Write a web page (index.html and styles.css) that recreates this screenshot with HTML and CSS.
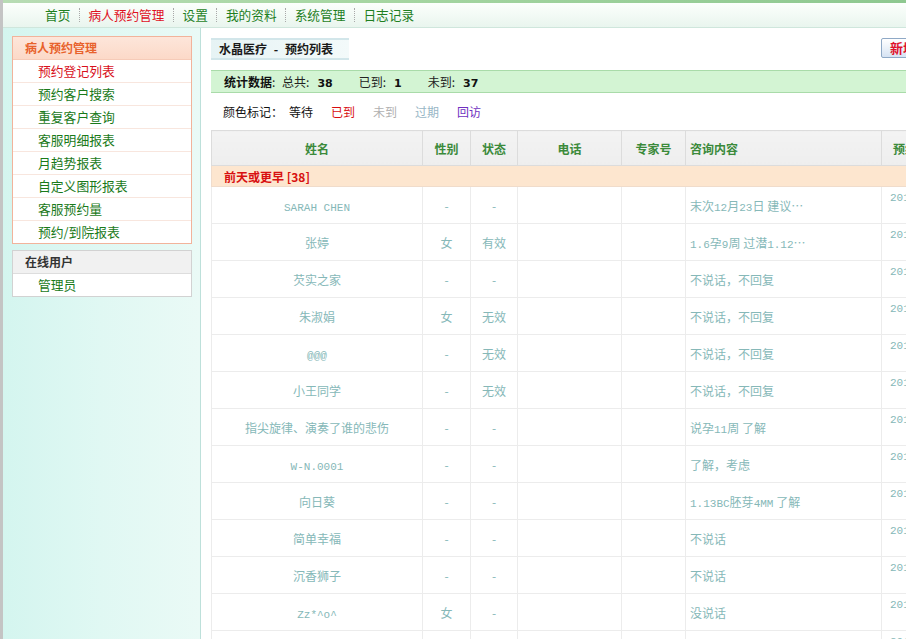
FILE: index.html
```html
<!DOCTYPE html>
<html lang="zh-CN">
<head>
<meta charset="utf-8">
<title>水晶医疗 - 预约列表</title>
<link rel="stylesheet" href="styles.css">
</head>
<body>
<div class="topbar"></div>
<nav class="nav">
  <a class="nav-item">首页</a><span class="sep"></span>
  <a class="nav-item active">病人预约管理</a><span class="sep"></span>
  <a class="nav-item">设置</a><span class="sep"></span>
  <a class="nav-item">我的资料</a><span class="sep"></span>
  <a class="nav-item">系统管理</a><span class="sep"></span>
  <a class="nav-item">日志记录</a>
</nav>
<div class="layout">
  <aside class="sidebar">
    <div class="menu menu-main">
      <div class="menu-title">病人预约管理</div>
      <a class="menu-item active">预约登记列表</a>
      <a class="menu-item">预约客户搜索</a>
      <a class="menu-item">重复客户查询</a>
      <a class="menu-item">客服明细报表</a>
      <a class="menu-item">月趋势报表</a>
      <a class="menu-item">自定义图形报表</a>
      <a class="menu-item">客服预约量</a>
      <a class="menu-item">预约/到院报表</a>
    </div>
    <div class="menu menu-online">
      <div class="menu-title">在线用户</div>
      <a class="menu-item">管理员</a>
    </div>
  </aside>
  <main class="main">
    <div class="content">
      <div class="title-row">
        <div class="page-title">水晶医疗 - 预约列表</div>
        <button class="btn-add">新增</button>
      </div>
      <div class="stats"><b>统计数据</b>: <span class="lbl">总共:</span><b class="num">38</b><span class="lbl">已到:</span><b class="num">1</b><span class="lbl">未到:</span><b class="num">37</b></div>
      <div class="legend">颜色标记：<span class="c-wait">等待</span><span class="c-come">已到</span><span class="c-not">未到</span><span class="c-exp">过期</span><span class="c-visit">回访</span></div>
      <table class="list">
        <colgroup>
          <col class="w-name"><col class="w-sex"><col class="w-state"><col class="w-tel"><col class="w-exp"><col class="w-ask"><col class="w-time">
        </colgroup>
        <thead>
          <tr><th>姓名</th><th>性别</th><th>状态</th><th>电话</th><th>专家号</th><th class="left">咨询内容</th><th class="left time-h">预约时间</th></tr>
        </thead>
        <tbody>
          <tr class="group"><td colspan="7">前天或更早 [38]</td></tr>
          <tr><td><span class="en">SARAH CHEN</span></td><td>-</td><td>-</td><td></td><td></td><td class="ask">末次<span class="en">12</span>月<span class="en">23</span>日 建议…</td><td class="time en">2012-12-28 10:00</td></tr>
          <tr><td>张婷</td><td>女</td><td>有效</td><td></td><td></td><td class="ask"><span class="en">1.6</span>孕<span class="en">9</span>周 过潜<span class="en">1.12</span>…</td><td class="time en">2012-12-27 14:30</td></tr>
          <tr><td>芡实之家</td><td>-</td><td>-</td><td></td><td></td><td class="ask">不说话，不回复</td><td class="time en">2012-12-27 11:20</td></tr>
          <tr><td>朱淑娟</td><td>女</td><td>无效</td><td></td><td></td><td class="ask">不说话，不回复</td><td class="time en">2012-12-26 16:45</td></tr>
          <tr><td><span class="en">@@@</span></td><td>-</td><td>无效</td><td></td><td></td><td class="ask">不说话，不回复</td><td class="time en">2012-12-26 09:10</td></tr>
          <tr><td>小王同学</td><td>-</td><td>无效</td><td></td><td></td><td class="ask">不说话，不回复</td><td class="time en">2012-12-25 15:00</td></tr>
          <tr><td>指尖旋律、演奏了谁的悲伤</td><td>-</td><td>-</td><td></td><td></td><td class="ask">说孕<span class="en">11</span>周 了解</td><td class="time en">2012-12-25 10:30</td></tr>
          <tr><td><span class="en">W-N.0001</span></td><td>-</td><td>-</td><td></td><td></td><td class="ask">了解，考虑</td><td class="time en">2012-12-24 17:20</td></tr>
          <tr><td>向日葵</td><td>-</td><td>-</td><td></td><td></td><td class="ask"><span class="en">1.13BC</span>胚芽<span class="en">4MM</span> 了解</td><td class="time en">2012-12-24 13:00</td></tr>
          <tr><td>简单幸福</td><td>-</td><td>-</td><td></td><td></td><td class="ask">不说话</td><td class="time en">2012-12-23 11:40</td></tr>
          <tr><td>沉香狮子</td><td>-</td><td>-</td><td></td><td></td><td class="ask">不说话</td><td class="time en">2012-12-23 09:50</td></tr>
          <tr><td><span class="en">Zz*^o^</span></td><td>女</td><td>-</td><td></td><td></td><td class="ask">没说话</td><td class="time en">2012-12-22 16:15</td></tr>
          <tr><td>小雨</td><td>-</td><td>-</td><td></td><td></td><td class="ask">了解</td><td class="time en">2012-12-22 10:05</td></tr>
        </tbody>
      </table>
    </div>
  </main>
</div>
</body>
</html>
```
FILE: styles.css
```css
html, body {
  margin: 0;
  height: 100%;
  overflow: hidden;
}
body {
  font-family: "Noto Sans CJK SC", "Liberation Sans", sans-serif;
  font-size: 12px;
  color: #222;
  background: #fff;
  border-left: 3px solid #c4c4c4;
  display: flex;
  flex-direction: column;
}
.topbar {
  height: 3px;
  flex: none;
  background: linear-gradient(90deg, #b8dcb4, #a6d6a2 40%, #8ec890);
}
.nav {
  flex: none;
  height: 24px;
  display: flex;
  align-items: center;
  padding-left: 33.5px;
  background: linear-gradient(#fcfffc, #e9f5ee);
  border-bottom: 1px solid #cfe6dc;
  font-size: 12.7px;
  line-height: 16px;
}
.nav-item {
  padding: 0 8.5px;
  color: #1f7f1f;
  white-space: nowrap;
}
.nav-item.active { color: #e0101e; }
.nav .sep {
  width: 0;
  height: 14px;
  border-left: 1px dotted #a9a9a9;
}
.layout {
  flex: 1;
  min-height: 0;
  display: flex;
}
.sidebar {
  flex: none;
  width: 180px;
  padding: 8px 8px 0 9px;
  background: linear-gradient(90deg, #d4f5ef, #e0f8f3 50%, #eafaf6);
  border-right: 1px solid #bde0da;
}
.menu {
  background: #fff;
  display: flex;
  flex-direction: column;
}
.menu-main { border: 1px solid #f2b39b; }
.menu-online { border: 1px solid #d2d2d2; margin-top: 6px; }
.menu-title {
  height: 22px;
  line-height: 22px;
  padding-left: 12px;
  font-weight: bold;
  font-size: 12px;
}
.menu-main .menu-title {
  color: #e8622c;
  background: linear-gradient(#fde6da, #fcd9c8);
  border-bottom: 1px solid #f6cbb8;
}
.menu-online .menu-title {
  color: #333;
  background: #f1f1f1;
  border-bottom: 1px solid #dddddd;
}
.menu-item {
  height: 22px;
  line-height: 22px;
  padding-left: 25px;
  font-size: 12.8px;
  color: #1a7a1a;
  border-bottom: 1px solid #f8e6de;
}
.menu-item:last-child { border-bottom: none; }
.menu-item.active { color: #d8101c; }
.main {
  flex: 1;
  min-width: 0;
  overflow: hidden;
  padding: 10px 0 0 10px;
}
.content { width: 719px; }
.title-row {
  display: flex;
  align-items: flex-start;
  justify-content: space-between;
  height: 22px;
}
.page-title {
  height: 18px;
  line-height: 18px;
  padding: 0 16px 0 8px;
  font-weight: bold;
  color: #1a1a1a;
  word-spacing: 4px;
  background: linear-gradient(90deg, #e6f3f4, #f3fafa);
  border-top: 2px solid #d2e6ea;
  border-bottom: 2px solid #d2e6ea;
}
.btn-add {
  height: 20px;
  width: 49px;
  padding: 0 0 0 8px;
  text-align: left;
  font-family: inherit;
  font-size: 13px;
  font-weight: bold;
  line-height: 18px;
  color: #e0102a;
  background: linear-gradient(#ffffff, #d6e3f3);
  border: 1px solid #8fa9c6;
  border-radius: 2px;
}
.stats {
  margin-top: 10px;
  height: 21px;
  line-height: 21px;
  padding-left: 13px;
  background: #d3f4d3;
  border-top: 1px solid #a9dba9;
  border-bottom: 1px solid #a9dba9;
  color: #222;
}
.stats b { color: #111; }
.stats .lbl { margin-left: 4px; }
.stats .num {
  font-family: "DejaVu Sans", sans-serif;
  font-size: 11px;
  margin-left: 8px;
  margin-right: 22px;
}
.legend {
  height: 20px;
  line-height: 20px;
  padding: 9px 0 8px 12px;
  color: #111;
}
.legend span { margin-left: 6px; margin-right: 12px; }
.legend .c-wait { color: #111; }
.legend .c-come { color: #d80c10; }
.legend .c-not { color: #b0b0b0; }
.legend .c-exp { color: #98b6c6; }
.legend .c-visit { color: #7030c0; }
.list {
  width: 860px;
  table-layout: fixed;
  border-collapse: collapse;
  border: 1px solid #e2e2e2;
}
.w-name { width: 211px; }
.w-sex { width: 48px; }
.w-state { width: 47px; }
.w-tel { width: 104px; }
.w-exp { width: 64px; }
.w-ask { width: 196px; }
.w-time { width: 190px; }
.list th {
  height: 34px;
  padding: 0;
  background: linear-gradient(#f3f3f3, #eeeeee);
  border: 1px solid #dcdcdc;
  color: #3b8a3b;
  font-weight: bold;
  font-size: 12px;
  text-align: center;
}
.list th.left { text-align: left; padding-left: 4px; }
.list th.time-h { padding-left: 11px; }
.list td {
  height: 36px;
  padding: 0;
  border: 1px solid #ececec;
  text-align: center;
  color: #86b8b8;
  white-space: nowrap;
  overflow: hidden;
}
.list td.ask { text-align: left; padding-left: 4px; }
.list td.time { text-align: left; vertical-align: top; padding: 5px 0 0 8px; height: 31px; }
.list tr.group td {
  height: 20px;
  text-align: left;
  padding-left: 12px;
  background: #fde6cf;
  border-color: #f0dccb;
  color: #d81010;
  font-weight: bold;
}
.en {
  font-family: "Liberation Mono", monospace;
  font-size: 11px;
}
```
